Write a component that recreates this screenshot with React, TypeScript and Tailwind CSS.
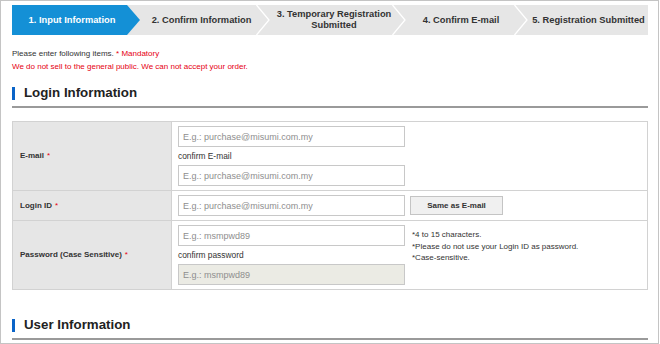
function Chevron() {
  return (
    <svg className="absolute right-0 top-0 h-[30px] w-[14px]" viewBox="0 0 14 30">
      <polyline points="0.5,0 13,15 0.5,30" fill="none" stroke="#ffffff" strokeWidth="1.3" />
    </svg>
  );
}

function Steps() {
  return (
    <div className="flex h-[30px] bg-[#e6e6e6] text-[9.3px] font-bold leading-[11px] text-[#333]">
      <div className="flex w-[128px] items-center justify-center bg-[#1490d6] pr-[8px] text-white [clip-path:polygon(0_0,115px_0,128px_50%,115px_100%,0_100%)]">
        1. Input Information
      </div>
      <div className="relative flex w-[130px] items-center justify-center pl-[6px] pr-[13px]">
        2. Confirm Information
        <Chevron />
      </div>
      <div className="relative flex w-[136px] items-center justify-center pl-[5px] pr-[13px] text-center">
        3. Temporary Registration
        <br />
        Submitted
        <Chevron />
      </div>
      <div className="relative flex w-[122px] items-center justify-center pl-[1px] pr-[13px]">
        4. Confirm E-mail
        <Chevron />
      </div>
      <div className="flex flex-1 items-center justify-center pl-[1px]">5. Registration Submitted</div>
    </div>
  );
}

function Heading({ title }: { title: string }) {
  return (
    <div className="flex items-center border-b-2 border-[#9a9a9a] pb-[5px]">
      <span className="h-[13px] w-[3px] bg-[#0a64c8]" />
      <span className="ml-[9px] text-[13.3px] font-bold leading-[16px] text-[#222]">{title}</span>
    </div>
  );
}

function Field({ placeholder, disabled }: { placeholder: string; disabled?: boolean }) {
  return (
    <input
      placeholder={placeholder}
      disabled={disabled}
      className={
        "block h-[21px] w-[227px] border border-[#c8c8c8] px-[4px] text-[9px] text-[#333] outline-none placeholder:text-[#8e8e8e] " +
        (disabled ? "bg-[#ebebe4]" : "bg-white")
      }
    />
  );
}

function Label({ text }: { text: string }) {
  return (
    <div className="flex w-[159px] shrink-0 items-center border-r border-[#d2d2d2] bg-[#e6e6e6] pl-[7px] text-[8px] font-bold text-[#333]">
      {text}
      <span className="ml-[3px] font-normal text-[#e60012]">*</span>
    </div>
  );
}

function SubLabel({ text }: { text: string }) {
  return <div className="flex h-[18px] items-center text-[8.4px] text-[#333]">{text}</div>;
}

export default function App() {
  return (
    <div className="h-[344px] w-[659px] overflow-hidden border border-[#c4c4c4] bg-white pl-[11px] pr-[10px] pt-[4px] font-['Liberation_Sans',Arial,sans-serif]">
      <Steps />

      <div className="mt-[12px] text-[8px] leading-[13px]">
        <p className="text-[#333]">
          Please enter following items. <span className="text-[#e60012]">* Mandatory</span>
        </p>
        <p className="text-[#e60012]">We do not sell to the general public. We can not accept your order.</p>
      </div>

      <div className="mt-[12px]">
        <Heading title="Login Information" />
      </div>

      <div className="mt-[13px] border border-[#d2d2d2]">
        <div className="flex border-b border-[#d2d2d2]">
          <Label text="E-mail" />
          <div className="py-[4px] pl-[6px]">
            <Field placeholder="E.g.: purchase@misumi.com.my" />
            <SubLabel text="confirm E-mail" />
            <Field placeholder="E.g.: purchase@misumi.com.my" />
          </div>
        </div>

        <div className="flex border-b border-[#d2d2d2]">
          <Label text="Login ID" />
          <div className="flex items-center py-[4px] pl-[6px]">
            <Field placeholder="E.g.: purchase@misumi.com.my" />
            <button className="ml-[5px] h-[19px] w-[93px] border border-[#c4c4c4] bg-[#f0f0f0] text-[8px] font-bold text-[#333]">
              Same as E-mail
            </button>
          </div>
        </div>

        <div className="flex">
          <Label text="Password (Case Sensitive)" />
          <div className="flex py-[4px] pl-[6px]">
            <div>
              <Field placeholder="E.g.: msmpwd89" />
              <SubLabel text="confirm password" />
              <Field placeholder="E.g.: msmpwd89" disabled />
            </div>
            <div className="ml-[7px] mt-[4px] text-[8px] leading-[11.5px] text-[#333]">
              <p>*4 to 15 characters.</p>
              <p>*Please do not use your Login ID as password.</p>
              <p>*Case-sensitive.</p>
            </div>
          </div>
        </div>
      </div>

      <div className="mt-[27px]">
        <Heading title="User Information" />
      </div>
    </div>
  );
}
